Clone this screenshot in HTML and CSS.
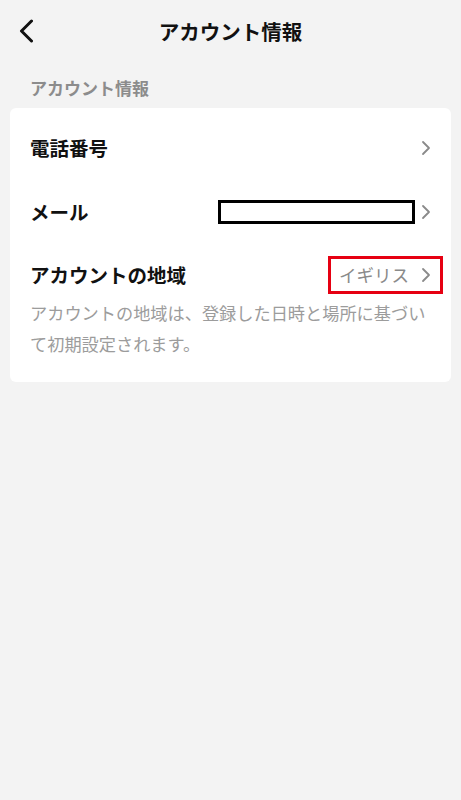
FILE: index.html
```
<!DOCTYPE html>
<html lang="ja">

<head>
    <meta charset="UTF-8">
    <meta name="viewport" content="width=device-width, initial-scale=1.0">
    <title>アカウント情報</title>
    <link rel="stylesheet" href="styles.css">
</head>

<body>
    <!-- Top bar -->
    <div class="topbar">
        <button class="backBtn" aria-label="戻る">
            <svg width="14" height="24" viewBox="0 0 14 24">
                <path d="M12.5 2 L2.5 12 L12.5 22" fill="none" stroke="#111" stroke-width="3" stroke-linecap="round" stroke-linejoin="round" />
            </svg>
        </button>
        <h1 class="title">アカウント情報</h1>
    </div>

    <div class="sectionLabel">アカウント情報</div>

    <div class="card">
        <div class="row">
            <span class="rowLabel">電話番号</span>
            <span class="rowValue">
                <svg class="chevron" width="10" height="16" viewBox="0 0 10 16">
                    <path d="M2 2 L8 8 L2 14" fill="none" stroke="#8a8a8a" stroke-width="1.8" stroke-linecap="round" stroke-linejoin="round" />
                </svg>
            </span>
        </div>
        <div class="row">
            <span class="rowLabel">メール</span>
            <span class="rowValue">
                <span class="hiddenBox"></span>
                <svg class="chevron" width="10" height="16" viewBox="0 0 10 16">
                    <path d="M2 2 L8 8 L2 14" fill="none" stroke="#8a8a8a" stroke-width="1.8" stroke-linecap="round" stroke-linejoin="round" />
                </svg>
            </span>
        </div>
        <div class="row regionRow">
            <span class="rowLabel">アカウントの地域</span>
            <span class="rowValue marked">
                <span class="valueText">イギリス</span>
                <svg class="chevron" width="10" height="16" viewBox="0 0 10 16">
                    <path d="M2 2 L8 8 L2 14" fill="none" stroke="#8a8a8a" stroke-width="1.8" stroke-linecap="round" stroke-linejoin="round" />
                </svg>
            </span>
        </div>
        <p class="note">アカウントの地域は、登録した日時と場所に基づいて初期設定されます。</p>
    </div>
</body>

</html>
```
FILE: styles.css
```
body {
    margin: 0;
    padding: 0;
    width: 461px;
    min-height: 800px;
    background-color: #f3f3f3;
    font-family: "Noto Sans CJK JP", "Noto Sans", sans-serif;
    color: #111;
}

/* Top bar */
.topbar {
    height: 62px;
    display: flex;
    align-items: center;
    justify-content: center;
    position: relative;
}
.backBtn {
    position: absolute;
    left: 13px;
    top: 19px;
    padding: 0 6px;
    border: none;
    background: none;
    display: flex;
}
.title {
    margin: 0;
    font-size: 20.5px;
    font-weight: bold;
    line-height: 28px;
}

.sectionLabel {
    margin: 14px 0 0 30px;
    font-size: 17px;
    line-height: 24px;
    font-weight: bold;
    color: #8c8c8c;
}

/* Card */
.card {
    margin: 8px 10px 0;
    padding: 8px 20px 23px;
    background-color: #fff;
    border-radius: 6px;
}
.row {
    height: 64px;
    display: flex;
    align-items: center;
    justify-content: space-between;
}
.rowLabel {
    font-size: 19.5px;
    font-weight: bold;
    line-height: 28px;
}
.rowValue {
    display: flex;
    align-items: center;
    gap: 6px;
}
.chevron {
    display: block;
}
.hiddenBox {
    width: 191px;
    height: 18px;
    border: 3px solid #000;
}
.regionRow {
    height: 44px;
    margin-top: 9px;
}
.marked {
    margin-right: -12px;
    padding: 3px 9px 3px 8px;
    gap: 12px;
    border: 3px solid #e60012;
}
.valueText {
    font-size: 17.5px;
    line-height: 26px;
    color: #8a8a8a;
}
.note {
    margin: 0;
    font-size: 17.2px;
    line-height: 31px;
    color: #9c9c9c;
}
```
